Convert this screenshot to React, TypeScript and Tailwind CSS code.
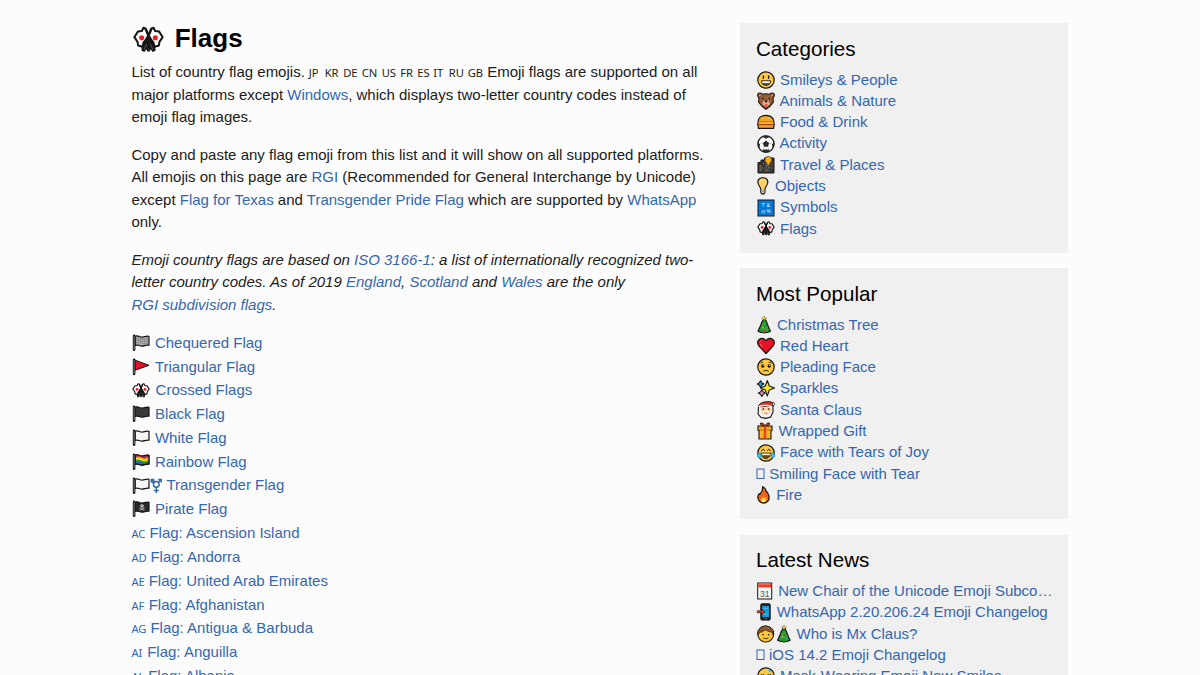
import type { ReactNode } from "react";

type IconName =
  | "chequered" | "triangular" | "crossed" | "black" | "white" | "rainbow" | "trans" | "pirate"
  | "smiley" | "bear" | "burger" | "ball" | "city" | "bulb" | "symbols"
  | "tree" | "heart" | "pleading" | "sparkles" | "santa" | "gift" | "joy" | "missing" | "fire"
  | "calendar" | "phone" | "mx" | "mask";

const K = "#161616";
const flagShape = "M4.2 3.3C7 1.8 9 4.4 11.5 4C14 3.6 16 2.7 18 3.3V12.2C15.5 11.6 13.5 13 11 13.1C8.5 13.2 6.5 11.2 4.2 12.4Z";

function Flag({ fill, children }: { fill: string; children?: ReactNode }) {
  return (
    <>
      <path d={flagShape} fill={fill} stroke={K} strokeWidth="1.2" strokeLinejoin="round" />
      {children}
      <path d="M3.1 2.9V16.8" stroke={K} strokeWidth="2.6" strokeLinecap="round" />
      <path d="M3.1 3V16.6" stroke="#888" strokeWidth="0.9" />
    </>
  );
}

function Face({ children }: { children: ReactNode }) {
  return (
    <>
      <circle cx="10" cy="10" r="8.2" fill="#ffc83d" stroke={K} strokeWidth="1.2" />
      {children}
    </>
  );
}

function Tree() {
  return (
    <>
      <path d="M8 3.5L5.8 7.2L4.6 10.5L3.2 13.4L2 16.3L5 17.5H11.5L14.5 16.3L13 13.2L11.8 10.2L10.6 7L8.9 3.5Z" fill="#1d9a30" stroke={K} strokeWidth="1.2" strokeLinejoin="round" />
      <path d="M8.3 1L9.2 2.6L10.8 3L9.4 4.3L8.3 5L7.2 4.3L5.9 3L7.5 2.6Z" fill="#ffd52e" stroke={K} strokeWidth=".3" />
      <path d="M6 9.5Q9 10.5 10.3 8M5 14Q10 14.5 12 11.5" fill="none" stroke="#67bd43" strokeWidth=".7" />
      <circle cx="9.8" cy="10.8" r=".9" fill="#e33b2e" />
      <circle cx="6.8" cy="12.2" r=".8" fill="#f2c53a" />
      <circle cx="7.9" cy="15.5" r=".9" fill="#e33b2e" />
      <circle cx="11.3" cy="14.7" r=".8" fill="#4bb7e8" />
      <rect x="7" y="17" width="2.8" height="1.6" fill="#70401f" />
    </>
  );
}

function Crossed() {
  return (
    <>
      <g stroke={K} strokeWidth="1.15" strokeLinejoin="round" fill="#fff">
        <path d="M7.1 2.7L8.5 3.3L10 6.8L8.3 10L6.4 13.6L4.1 12.9L3.7 10.6L1.9 8.1L4 4.8L6.2 4.6Z" />
        <path d="M12.9 2.7L11.5 3.3L10 6.8L11.7 10L13.6 13.6L15.9 12.9L16.3 10.6L18.1 8.1L16 4.8L13.8 4.6Z" />
      </g>
      <circle cx="6.1" cy="8.4" r="1.45" fill="#ed1c24" />
      <circle cx="13.9" cy="8.4" r="1.45" fill="#ed1c24" />
      <path d="M8.2 3.4L13.4 15.8M11.8 3.4L6.6 15.8" stroke={K} strokeWidth="1.1" />
      <path d="M10 7.2L11.2 9L13 11.2L13.6 15.5L12.5 16.1L11 13.8L10.5 15.8H9.5L9 13.8L7.5 16.1L6.4 15.5L7 11.2L8.8 9Z" fill={K} stroke={K} strokeWidth=".9" strokeLinejoin="round" />
      <path d="M11 12L12.5 15.2M9 12L7.5 15.2" stroke="#777" strokeWidth=".4" />
    </>
  );
}

const drawings: Record<IconName, ReactNode> = {
  chequered: (
    <Flag fill="#a8a8a8">
      <path d="M5 5.4Q8 4.2 11 5.8T17.3 5M5 7.6Q8 6.4 11 8T17.3 7.2M5 9.8Q8 8.6 11 10.2T17.3 9.4" fill="none" stroke="#666" strokeWidth="1" strokeDasharray="1 1" />
    </Flag>
  ),
  triangular: (
    <>
      <path d="M4.2 3.2L18 8.3L4.2 13.2Z" fill="#e81224" stroke={K} strokeWidth="1" strokeLinejoin="round" />
      <path d="M3.1 2.8V17" stroke={K} strokeWidth="2.6" strokeLinecap="round" />
      <path d="M3.1 3V16.8" stroke="#888" strokeWidth=".9" />
    </>
  ),
  crossed: <Crossed />,
  black: <Flag fill="#383838" />,
  white: <Flag fill="#f5f5f5" />,
  rainbow: (
    <Flag fill="#2862bd">
      <g fill="none" strokeWidth="1.7">
        <path d="M4.8 4Q8 3 11 4.7T17.4 4.1" stroke="#e81224" />
        <path d="M4.8 5.7Q8 4.7 11 6.4T17.4 5.8" stroke="#f7941e" />
        <path d="M4.8 7.3Q8 6.3 11 8T17.4 7.4" stroke="#fff100" />
        <path d="M4.8 8.9Q8 7.9 11 9.6T17.4 9" stroke="#26963d" />
      </g>
      <path d={flagShape} fill="none" stroke={K} strokeWidth="1" />
    </Flag>
  ),
  trans: (
    <>
      <Flag fill="#f5f5f5" />
      <g stroke="#3567ae" strokeWidth="1.5" fill="none">
        <circle cx="25.3" cy="8.4" r="2.8" />
        <path d="M25.3 11.2V17M22.8 14.5H27.8M23.3 6.3L20.4 3.5M20.4 6.5V3.5H23.3M27.3 6.3L30.2 3.5M27.3 3.5H30.2V6.5M21 7L23.6 4.6" />
      </g>
    </>
  ),
  pirate: (
    <Flag fill="#2a2a2a">
      <circle cx="11" cy="7" r="1.8" fill="#ddd" />
      <path d="M8.5 9L13.5 11.4M13.5 9L8.5 11.4" stroke="#ccc" strokeWidth=".8" />
      <path d="M10 7H10.8M11.4 7H12.2" stroke="#222" strokeWidth=".8" />
    </Flag>
  ),
  smiley: (
    <Face>
      <path d="M7.4 5.4V8.8M12.6 5.4V8.8" stroke={K} strokeWidth="1.4" />
      <path d="M5.4 10.8H14.6Q14.4 15.4 10 15.4T5.4 10.8Z" fill="#555" stroke={K} strokeWidth=".8" />
      <path d="M6.2 11.3H13.8V13H6.2Z" fill="#fff" />
    </Face>
  ),
  bear: (
    <>
      <path d="M2 2.8Q4 1 6.5 3.2Q10 2.2 13.5 3.2Q16 1 18 2.8Q19 5 17 7L17.4 11L14 15.3L10 18.2L6 15.3L2.6 11L3 7Q1 5 2 2.8Z" fill="#9b5b35" stroke={K} strokeWidth="1.1" />
      <path d="M3 3.4L5 3.7L3.7 5.6ZM17 3.4L15 3.7L16.3 5.6Z" fill="#ef9b91" />
      <path d="M7.8 9H12.2L13.9 13L10 16.3L6.1 13Z" fill="#deb08a" />
      <path d="M8 9.2H12L10 11.9Z" fill={K} />
      <circle cx="6.7" cy="7.5" r=".85" fill={K} /><circle cx="13.3" cy="7.5" r=".85" fill={K} />
      <path d="M8.4 13.3H11.6L10.8 16.3H9.2Z" fill="#f0444b" />
    </>
  ),
  burger: (
    <>
      <path d="M2.2 9Q2.8 3.6 10 3.3Q17.2 3.6 17.8 9V10.5L18.2 12.5L17.5 16.3H2.5L1.8 12.5Z" fill="#f5a51d" stroke={K} strokeWidth="1.2" />
      <path d="M2.6 9.6H17.4" stroke="#d66b1e" strokeWidth=".9" /><path d="M3 11.2H17" stroke="#ffc83d" strokeWidth="1" />
      <path d="M2.4 12.6H17.6" stroke="#a23712" strokeWidth="1.1" />
      <path d="M6 6.3H7M9 5.3H10M12 6.3H13" stroke="#fff0aa" strokeWidth=".7" />
    </>
  ),
  ball: (
    <>
      <circle cx="10" cy="10" r="8.1" fill="#fff" stroke={K} strokeWidth="1.2" />
      <path d="M10 6.8L13.1 9L12 12.7H8L6.9 9ZM5.8 2.7L10 4.7L14.2 2.7L13 1.8H7ZM1.9 8.2L4 10.2L3.5 14.7L1.6 11ZM18.1 8.2L16 10.2L16.5 14.7L18.4 11ZM7 15.5H13L13.6 18L10 18.7L6.4 18Z" fill="#292929" />
      <path d="M10 7V4M13 9L16.2 10M12 12.8L13.3 16M8 12.8L6.7 16M7 9L3.8 10" stroke="#999" strokeWidth=".5" />
    </>
  ),
  city: (
    <>
      <path d="M2 7.5H5V5H8.5V3H18V18H2Z" fill="#353535" stroke={K} strokeWidth="1" />
      <circle cx="12.3" cy="4.9" r="3.5" fill="#f8ae13" stroke={K} strokeWidth=".6" />
      <path d="M9 9H14V17H9ZM3 10H6.5V17H3Z" fill="#4a4a4a" />
      <path d="M4 11.2H5M7 8.5H8M10.2 10.5H11M12.5 12.5H13.3M4.2 14.5H5M10 15.3H11M15.5 9.2H16.5M15.5 13H16.5M7.2 13.2H8" stroke="#bd8732" strokeWidth="1" />
      <path d="M12.3 7V9.5" stroke="#ffbd26" strokeWidth="2" />
    </>
  ),
  bulb: (
    <>
      <path d="M4.8 13.3Q4.2 11 2.8 9Q.8 5.5 3.1 3Q7 .2 10.6 3Q12.9 5.5 10.9 9Q9.5 11 8.9 13.3V16.6L7.9 17.9H5.8L4.8 16.6Z" fill="#ffd16b" stroke={K} strokeWidth="1.2" />
      <path d="M5.4 13.3H8.3V16.8H5.4Z" fill="#c3c3c3" /><path d="M5.4 15H8.3" stroke="#555" strokeWidth=".6" />
    </>
  ),
  symbols: (
    <>
      <rect x="2" y="2" width="16" height="16" fill="#0078d7" stroke={K} strokeWidth="1" />
      <text x="5.8" y="9.2" fontSize="5" fontFamily="Liberation Sans" fill="white">T</text>
      <text x="10.6" y="9.2" fontSize="5" fontFamily="Liberation Sans" fill="white">&amp;</text>
      <text x="4.9" y="14.8" fontSize="4.4" fontFamily="Liberation Sans" fill="white">@</text>
      <text x="10.6" y="14.8" fontSize="4.6" fontFamily="Liberation Sans" fill="white">%</text>
    </>
  ),
  tree: <Tree />,
  heart: (
    <>
      <path d="M10 17.5L2.8 9.8Q.3 5.9 3.2 3.5Q6.8 1 10 4.6Q13.2 1 16.8 3.5Q19.7 5.9 17.2 9.8Z" fill="#e81224" stroke={K} strokeWidth="1.2" />
      <path d="M4 7.8L6.5 11M3.9 5.5L5.2 4.6" stroke="#ff8b91" strokeWidth=".7" />
    </>
  ),
  pleading: (
    <Face>
      <circle cx="6.8" cy="9" r="1.7" fill={K} /><circle cx="13.2" cy="9" r="1.7" fill={K} />
      <circle cx="7.2" cy="8.4" r=".5" fill="#fff" /><circle cx="13.6" cy="8.4" r=".5" fill="#fff" />
      <path d="M7.2 14.2Q10 12.4 12.8 14.2M4.6 6L7.2 5M15.4 6L12.8 5" fill="none" stroke={K} strokeWidth=".9" />
    </Face>
  ),
  sparkles: (
    <g stroke={K} strokeWidth="1.1" strokeLinejoin="round">
      <path d="M11.3 1.5L13.3 7L18.5 9L13.3 11L11.3 17L9.3 11L4.3 9L9.3 7Z" fill="#ffe51e" />
      <path d="M4.6 1.8L6 3.9L7.9 5L6 6.1L4.6 8.2L3.2 6.1L1.3 5L3.2 3.9Z" fill="#22a9e1" />
      <path d="M5.8 10.8L7.2 13L9.2 14.1L7.2 15.3L5.8 17.5L4.4 15.3L2.4 14.1L4.4 13Z" fill="#ef95b5" />
    </g>
  ),
  santa: (
    <>
      <path d="M2.5 6L2.1 14L5 17.5L10 18.4L14.7 17L17 12V6Z" fill="#f2f2f2" stroke={K} strokeWidth="1.1" />
      <path d="M5 7.5H15V11Q14.2 14.2 10 14.4Q5.8 14.2 5 11Z" fill="#ffcf9d" />
      <path d="M2.6 6.7Q3 3.2 8 2Q14 .8 18 3V5.2L15.2 6.4Z" fill="#e83225" stroke={K} strokeWidth=".9" />
      <path d="M2.5 6.6Q9.5 4.5 16 6.7" stroke="#fff" strokeWidth="1.5" fill="none" />
      <circle cx="17.4" cy="4" r="1.2" fill="#fff" stroke={K} strokeWidth=".6" />
      <circle cx="7.3" cy="9.1" r=".8" fill={K} /><circle cx="12.7" cy="9.1" r=".8" fill={K} />
      <path d="M7 12.3L10 11L13 12.3" fill="none" stroke="#fff" strokeWidth="1.3" /><path d="M8.6 13.3H11.4" stroke="#c25345" strokeWidth=".7" />
    </>
  ),
  gift: (
    <>
      <path d="M2 5H16V9.5H15V18H3V9.5H2Z" fill="#f5a81c" stroke={K} strokeWidth="1.1" />
      <path d="M7.8 5H10.2V17.5H7.8Z" fill="#e34525" />
      <path d="M8.5 5Q3.7 4.5 4.3 2.2Q6.7 .8 9 4.6Q11.3 .8 13.7 2.2Q14.3 4.5 9.5 5" fill="#e34525" stroke={K} strokeWidth=".9" />
      <path d="M3 9H7.5M10.5 9H15" stroke="#aa610b" strokeWidth=".7" />
      <path d="M4.8 10V16.8M13.2 10V16.8" stroke="#ffcd5b" strokeWidth=".8" />
    </>
  ),
  joy: (
    <Face>
      <path d="M5.2 8L7.2 6.2L8.8 7.7M11.2 7.7L12.8 6.2L14.8 8" fill="none" stroke={K} strokeWidth="1" />
      <path d="M5.5 10H14.5Q14.2 15.3 10 15.6T5.5 10Z" fill="#684510" stroke={K} strokeWidth=".6" />
      <path d="M6.2 10.6H13.8V12.2H6.2Z" fill="#fff" />
      <path d="M4.3 9.3L5.2 13.5L3.4 15.1L1.3 13.7V11.5ZM15.7 9.3L14.8 13.5L16.6 15.1L18.7 13.7V11.5Z" fill="#38b9ed" stroke="#1480ae" strokeWidth=".5" />
    </Face>
  ),
  missing: <rect x="1" y="5" width="7" height="9.5" fill="none" stroke="#3567ae" strokeWidth="1" />,
  fire: (
    <>
      <path d="M6.6 1.8Q10 3.4 10.2 6.4L11.5 7.5Q14.5 12.8 12 16Q8 20 3.4 16.3Q.4 12.6 3 8.8Q3.8 10 4.3 8.7Q7 5.2 6.6 1.8Z" fill="#ef6218" stroke={K} strokeWidth="1.2" />
      <path d="M8 10.2Q6.8 11.5 8.8 13.2L10 11.8Q11.4 14.2 9.8 16.3Q7.2 18 4.9 15.8Q4.4 14 6 12.7Z" fill="#ffba22" />
      <path d="M7.7 13.8L9 16L7.8 17H6.6L5.7 15.8Z" fill="#fff29a" />
    </>
  ),
  calendar: (
    <>
      <rect x="1.7" y="2" width="14" height="16" fill="#f5f5f5" stroke={K} strokeWidth="1" />
      <rect x="2.3" y="2.5" width="12.8" height="4" fill="#ee3b2c" />
      <path d="M3.5 3.2H14M3 7H14.5" stroke="#fff" strokeWidth=".6" strokeDasharray="1 1" />
      <text x="4" y="15.6" fontFamily="Liberation Sans" fontSize="8.5" fill="#555">31</text>
    </>
  ),
  phone: (
    <>
      <rect x="4.8" y="1.8" width="9.4" height="16.3" rx="1.1" fill="#222" stroke={K} />
      <rect x="6.2" y="3.9" width="6.8" height="11.2" fill="#179bd7" />
      <path d="M7.2 6.5H12M7.2 12.5H12" stroke="#56c5ec" strokeWidth=".7" />
      <path d="M1.3 8.8H5.6V7L8.9 9.8L5.6 12.6V10.8H1.3Z" fill="#eb3325" stroke={K} strokeWidth=".6" />
      <path d="M8.2 16.8H11" stroke="#888" strokeWidth=".6" />
    </>
  ),
  mx: (
    <>
      <circle cx="9.7" cy="10" r="8" fill="#ffc83d" stroke={K} strokeWidth="1.1" />
      <path d="M2.2 11V6.2Q5 1.8 9.7 1.8T17.2 6.2V11L15.8 8.2Q12 7.8 9 5.8Q7.2 8.4 3.5 8.4Z" fill="#8c5530" stroke={K} strokeWidth=".6" />
      <circle cx="6.9" cy="10.7" r=".8" fill={K} /><circle cx="12.7" cy="10.7" r=".8" fill={K} />
      <path d="M7.2 14Q9.8 15.6 12.4 14" fill="none" stroke={K} strokeWidth=".8" />
      <g transform="translate(19.6)"><Tree /></g>
    </>
  ),
  mask: (
    <Face>
      <path d="M5 8.5Q6.7 10.2 8.3 8.5M11.7 8.5Q13.3 10.2 15 8.5" fill="none" stroke={K} strokeWidth="1.1" />
      <path d="M12 4L14 6.8L15.5 4.3Z" fill="#38b9ed" />
      <path d="M4 11.5H16L14 16H6Z" fill="#eee" />
    </Face>
  ),
};

function Emoji({ name, className = "w-5 h-5" }: { name: IconName; className?: string }) {
  const wide = name === "trans" || name === "mx";
  return (
    <svg viewBox={wide ? "0 0 40 20" : "0 0 20 20"} className={`${wide ? "w-10 h-5" : className} block shrink-0`} aria-hidden="true">
      {drawings[name]}
    </svg>
  );
}

function A({ children }: { children: ReactNode }) {
  return <a href="#" className="text-[#3567ae]">{children}</a>;
}

type Row = { icon: IconName; slot: string; label: string };

const flags: Row[] = [
  { icon: "chequered", slot: "w-[23.5px]", label: "Chequered Flag" },
  { icon: "triangular", slot: "w-[23.5px]", label: "Triangular Flag" },
  { icon: "crossed", slot: "w-[24.2px]", label: "Crossed Flags" },
  { icon: "black", slot: "w-[23.5px]", label: "Black Flag" },
  { icon: "white", slot: "w-[23.5px]", label: "White Flag" },
  { icon: "rainbow", slot: "w-[23.5px]", label: "Rainbow Flag" },
  { icon: "trans", slot: "w-[35px]", label: "Transgender Flag" },
  { icon: "pirate", slot: "w-[23.5px]", label: "Pirate Flag" },
];

const countries = [
  { code: "AC", slot: "w-[18px]", label: "Ascension Island" },
  { code: "AD", slot: "w-[19px]", label: "Andorra" },
  { code: "AE", slot: "w-[17.3px]", label: "United Arab Emirates" },
  { code: "AF", slot: "w-[17.3px]", label: "Afghanistan" },
  { code: "AG", slot: "w-[19px]", label: "Antigua & Barbuda" },
  { code: "AI", slot: "w-[15.8px]", label: "Anguilla" },
  { code: "AL", slot: "w-[16.8px]", label: "Albania" },
];

const codes = [
  ["JP", "w-[16px]"], ["KR", "w-[18.5px]"], ["DE", "w-[18.5px]"], ["CN", "w-[20px]"], ["US", "w-[18.5px]"],
  ["FR", "w-[17px]"], ["ES", "w-[16px]"], ["IT", "w-[15.5px]"], ["RU", "w-[19px]"], ["GB", "w-[19.5px]"],
];

const panels: { title: string; rows: Row[] }[] = [
  {
    title: "Categories",
    rows: [
      { icon: "smiley", slot: "w-[24px]", label: "Smileys & People" },
      { icon: "bear", slot: "w-[23.5px]", label: "Animals & Nature" },
      { icon: "burger", slot: "w-[24px]", label: "Food & Drink" },
      { icon: "ball", slot: "w-[23.5px]", label: "Activity" },
      { icon: "city", slot: "w-[24px]", label: "Travel & Places" },
      { icon: "bulb", slot: "w-[19px]", label: "Objects" },
      { icon: "symbols", slot: "w-[24px]", label: "Symbols" },
      { icon: "crossed", slot: "w-[24px]", label: "Flags" },
    ],
  },
  {
    title: "Most Popular",
    rows: [
      { icon: "tree", slot: "w-[21px]", label: "Christmas Tree" },
      { icon: "heart", slot: "w-[24px]", label: "Red Heart" },
      { icon: "pleading", slot: "w-[24px]", label: "Pleading Face" },
      { icon: "sparkles", slot: "w-[24px]", label: "Sparkles" },
      { icon: "santa", slot: "w-[24px]", label: "Santa Claus" },
      { icon: "gift", slot: "w-[22.4px]", label: "Wrapped Gift" },
      { icon: "joy", slot: "w-[24px]", label: "Face with Tears of Joy" },
      { icon: "missing", slot: "w-[13.3px]", label: "Smiling Face with Tear" },
      { icon: "fire", slot: "w-[20.2px]", label: "Fire" },
    ],
  },
  {
    title: "Latest News",
    rows: [
      { icon: "calendar", slot: "w-[22.2px]", label: "New Chair of the Unicode Emoji Subco…" },
      { icon: "phone", slot: "w-[20.7px]", label: "WhatsApp 2.20.206.24 Emoji Changelog" },
      { icon: "mx", slot: "w-[40.5px]", label: "Who is Mx Claus?" },
      { icon: "missing", slot: "w-[13px]", label: "iOS 14.2 Emoji Changelog" },
      { icon: "mask", slot: "w-[24px]", label: "Mask-Wearing Emoji Now Smiles" },
    ],
  },
];

export default function App() {
  return (
    <div className="flex h-[675px] w-[1200px] items-start overflow-hidden bg-[#fcfcfc] pl-[131.4px] font-['Liberation_Sans',Arial,sans-serif] text-[15px] text-[#1b1b1b]">
      <main className="w-[609.1px] shrink-0 pt-[19.3px]">
        <h1 className="flex h-[41.75px] items-center text-[26px] font-bold text-black">
          <span className="w-[43.3px] shrink-0"><Emoji name="crossed" className="h-[35px] w-[35px]" /></span>
          <span className="pb-[3px]">Flags</span>
        </h1>
        <div className="flex flex-col gap-[15px] whitespace-nowrap leading-[22.5px]">
          <p>
            <span className="flex items-baseline">
              <span className="w-[177.3px]">List of country flag emojis.</span>
              {codes.map(([code, width]) => (
                <span key={code} className={`${width} shrink-0 font-['Noto_Sans',sans-serif] text-[11.2px] leading-[15px]`}>{code}</span>
              ))}
              <span>Emoji flags are supported on all</span>
            </span>
            major platforms except <A>Windows</A>, which displays two-letter country codes instead of<br />
            emoji flag images.
          </p>
          <p>
            Copy and paste any flag emoji from this list and it will show on all supported platforms.<br />
            All emojis on this page are <A>RGI</A> (Recommended for General Interchange by Unicode)<br />
            except <A>Flag for Texas</A> and <A>Transgender Pride Flag</A> which are supported by <A>WhatsApp</A><br />
            only.
          </p>
          <p className="italic">
            Emoji country flags are based on <A>ISO 3166-1</A>: a list of internationally recognized two-<br />
            letter country codes. As of 2019 <A>England</A>, <A>Scotland</A> and <A>Wales</A> are the only<br />
            <A>RGI subdivision flags</A>.
          </p>
        </div>
        <ul className="mt-[15.3px] text-[#3567ae]">
          {flags.map((row) => (
            <li key={row.label} className="flex h-[23.75px] items-center whitespace-nowrap">
              <span className={`${row.slot} shrink-0`}><Emoji name={row.icon} /></span>
              <a href="#">{row.label}</a>
            </li>
          ))}
          {countries.map((row) => (
            <li key={row.code} className="flex h-[23.75px] items-baseline whitespace-nowrap leading-[23.75px]">
              <span className={`${row.slot} shrink-0 font-['Noto_Sans',sans-serif] text-[11.2px] leading-[15px]`}>{row.code}</span>
              <a href="#">Flag: {row.label}</a>
            </li>
          ))}
        </ul>
      </main>
      <aside className="flex w-[328px] shrink-0 flex-col gap-[15.5px] pt-[23.3px]">
        {panels.map((panel) => (
          <section key={panel.title} className="bg-[#f0f0f0] px-[15.5px] pb-[13.4px]">
            <h2 className="flex h-[45.8px] items-center pt-[6px] text-[20.6px] text-black">{panel.title}</h2>
            <ul className="text-[#3567ae]">
              {panel.rows.map((row) => (
                <li key={row.label} className="flex h-[21.3px] items-center whitespace-nowrap">
                  <span className={`${row.slot} shrink-0`}><Emoji name={row.icon} /></span>
                  <a href="#">{row.label}</a>
                </li>
              ))}
            </ul>
          </section>
        ))}
      </aside>
    </div>
  );
}
